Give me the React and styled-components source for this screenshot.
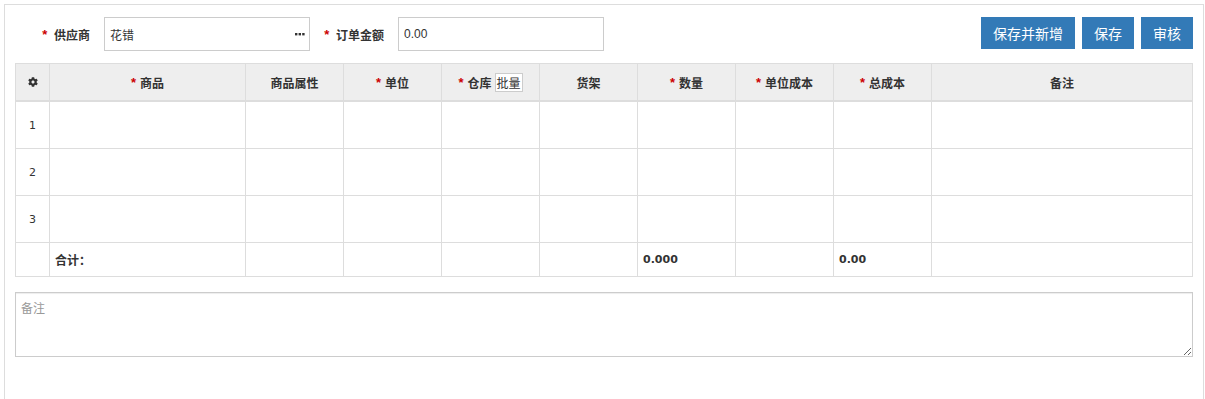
import styled, { createGlobalStyle } from 'styled-components';
import { FaCog } from 'react-icons/fa';

const GlobalStyle = createGlobalStyle`
  body {
    margin: 0;
    background: #fff;
    font-family: "Noto Sans CJK SC", "Liberation Sans", sans-serif;
    font-size: 12px;
    color: #333;
  }
`;

const columns = [
  { key: 'goods', title: '商品', required: true, width: 196 },
  { key: 'attr', title: '商品属性', width: 98 },
  { key: 'unit', title: '单位', required: true, width: 98 },
  { key: 'store', title: '仓库', required: true, width: 98, batch: true },
  { key: 'shelf', title: '货架', width: 98 },
  { key: 'qty', title: '数量', required: true, width: 98, total: '0.000' },
  { key: 'cost', title: '单位成本', required: true, width: 98 },
  { key: 'amount', title: '总成本', required: true, width: 98, total: '0.00' },
  { key: 'remark', title: '备注', width: 261 },
];

function Dots() {
  return (
    <svg width='10' height='3' viewBox='0 0 10 3'>
      <rect x='0' y='0' width='2.4' height='2.4' fill='#333' />
      <rect x='3.6' y='0' width='2.4' height='2.4' fill='#333' />
      <rect x='7.2' y='0' width='2.4' height='2.4' fill='#333' />
    </svg>
  );
}

function App() {
  return (
    <>
      <GlobalStyle />
      <Page>
        <Toolbar>
          <Fields>
            <Label $width={89}>
              <Star>*</Star> 供应商
            </Label>
            <InputBox>
              <Input defaultValue='花错' />
              <Addon>
                <Dots />
              </Addon>
            </InputBox>
            <Label $width={88}>
              <Star>*</Star> 订单金额
            </Label>
            <InputBox>
              <Input defaultValue='0.00' $num />
            </InputBox>
          </Fields>
          <Actions>
            <Button>保存并新增</Button>
            <Button>保存</Button>
            <Button>审核</Button>
          </Actions>
        </Toolbar>

        <Grid>
          <colgroup>
            <Col $width={34} />
            {columns.map((c) => (
              <Col key={c.key} $width={c.width} />
            ))}
          </colgroup>
          <thead>
            <tr>
              <Th>
                <Gear />
              </Th>
              {columns.map((c) => (
                <Th key={c.key}>
                  <HeadInner>
                    {c.required && <Star>*</Star>}
                    {c.title}
                    {c.batch && <Batch>批量</Batch>}
                  </HeadInner>
                </Th>
              ))}
            </tr>
          </thead>
          <tbody>
            {[1, 2, 3].map((n) => (
              <tr key={n}>
                <Index>{n}</Index>
                {columns.map((c) => (
                  <Td key={c.key} />
                ))}
              </tr>
            ))}
            <tr>
              <Foot />
              {columns.map((c, i) => (
                <Foot key={c.key} $num={!!c.total}>
                  {i === 0 ? '合计：' : c.total || ''}
                </Foot>
              ))}
            </tr>
          </tbody>
        </Grid>

        <Remark placeholder='备注' />
      </Page>
    </>
  );
}

// -------------------------------------------------- styling ----------------------------------------------
const Page = styled.div`
  width: 1178px;
  min-height: 420px;
  margin: 4px 0 0 4px;
  padding: 12px 10px 0;
  border: 1px solid #ddd;
`;

const Toolbar = styled.div`
  display: flex;
  justify-content: space-between;
  align-items: flex-start;
  margin-bottom: 12px;
`;

const Fields = styled.div`
  display: flex;
  align-items: center;
`;

const Label = styled.label`
  width: ${(p) => p.$width}px;
  box-sizing: border-box;
  padding-right: 14px;
  text-align: right;
  font-weight: bold;
  font-size: 12px;
  color: #333;
  white-space: nowrap;
`;

const Star = styled.span`
  margin-right: 4px;
  color: #c00;
  font-family: "Liberation Sans", sans-serif;
  font-size: 13px;
  font-weight: bold;
  vertical-align: 1px;
`;

const InputBox = styled.div`
  display: flex;
  align-items: center;
  box-sizing: border-box;
  width: 206px;
  height: 34px;
  border: 1px solid #ccc;
  background: #fff;
`;

const Input = styled.input`
  flex: 1;
  min-width: 0;
  height: 100%;
  border: 0;
  outline: 0;
  padding: 0 5px;
  font-family: ${(p) => (p.$num ? '"Liberation Sans", sans-serif' : '"Noto Sans CJK SC", sans-serif')};
  font-size: 12px;
  color: #333;
  background: transparent;
`;

const Addon = styled.span`
  display: flex;
  align-items: center;
  padding: 0 4px 0 6px;
  height: 100%;
`;

const Actions = styled.div`
  display: flex;
  gap: 7px;
`;

const Button = styled.button`
  height: 32px;
  padding: 0 12px;
  border: 0;
  background: #337ab7;
  color: #fff;
  font-family: "Noto Sans CJK SC", sans-serif;
  font-size: 14px;
  cursor: pointer;
`;

const Grid = styled.table`
  width: 1178px;
  table-layout: fixed;
  border-collapse: collapse;
  font-size: 12px;

  td,
  th {
    border: 1px solid #ddd;
    padding: 0;
  }
`;

const Col = styled.col`
  width: ${(p) => p.$width}px;
`;

const Th = styled.th`
  height: 36px;
  background: #eee;
  border-bottom-width: 2px !important;
  text-align: center;
  font-weight: bold;
  color: #333;
  white-space: nowrap;
`;

const HeadInner = styled.span`
  display: inline-flex;
  align-items: center;
`;

const Gear = styled(FaCog)`
  display: block;
  margin: 0 auto;
  width: 10px;
  height: 10px;
  color: #333;
`;

const Batch = styled.span`
  margin-left: 3px;
  padding: 0 1px;
  height: 17px;
  line-height: 17px;
  border: 1px solid #ccc;
  background: #fff;
  font-weight: normal;
`;

const Td = styled.td`
  height: 46px;
`;

const Index = styled.td`
  height: 46px;
  text-align: center;
  font-family: "DejaVu Sans", sans-serif;
  font-size: 11px;
  color: #333;
`;

const Foot = styled.td`
  height: 33px;
  padding-left: 5px !important;
  font-weight: bold;
  color: #333;
  font-family: ${(p) => (p.$num ? '"DejaVu Sans", sans-serif' : '"Noto Sans CJK SC", sans-serif')};
  font-size: ${(p) => (p.$num ? '11px' : '12px')};
`;

const Remark = styled.textarea`
  display: block;
  box-sizing: border-box;
  width: 1178px;
  height: 65px;
  margin-top: 15px;
  padding: 6px 5px;
  border: 1px solid #ccc;
  box-shadow: inset 0 1px 1px rgba(0, 0, 0, 0.075);
  outline: 0;
  font-family: "Noto Sans CJK SC", sans-serif;
  font-size: 12px;
  color: #333;

  &::placeholder {
    color: #999;
  }
`;

export default App;
